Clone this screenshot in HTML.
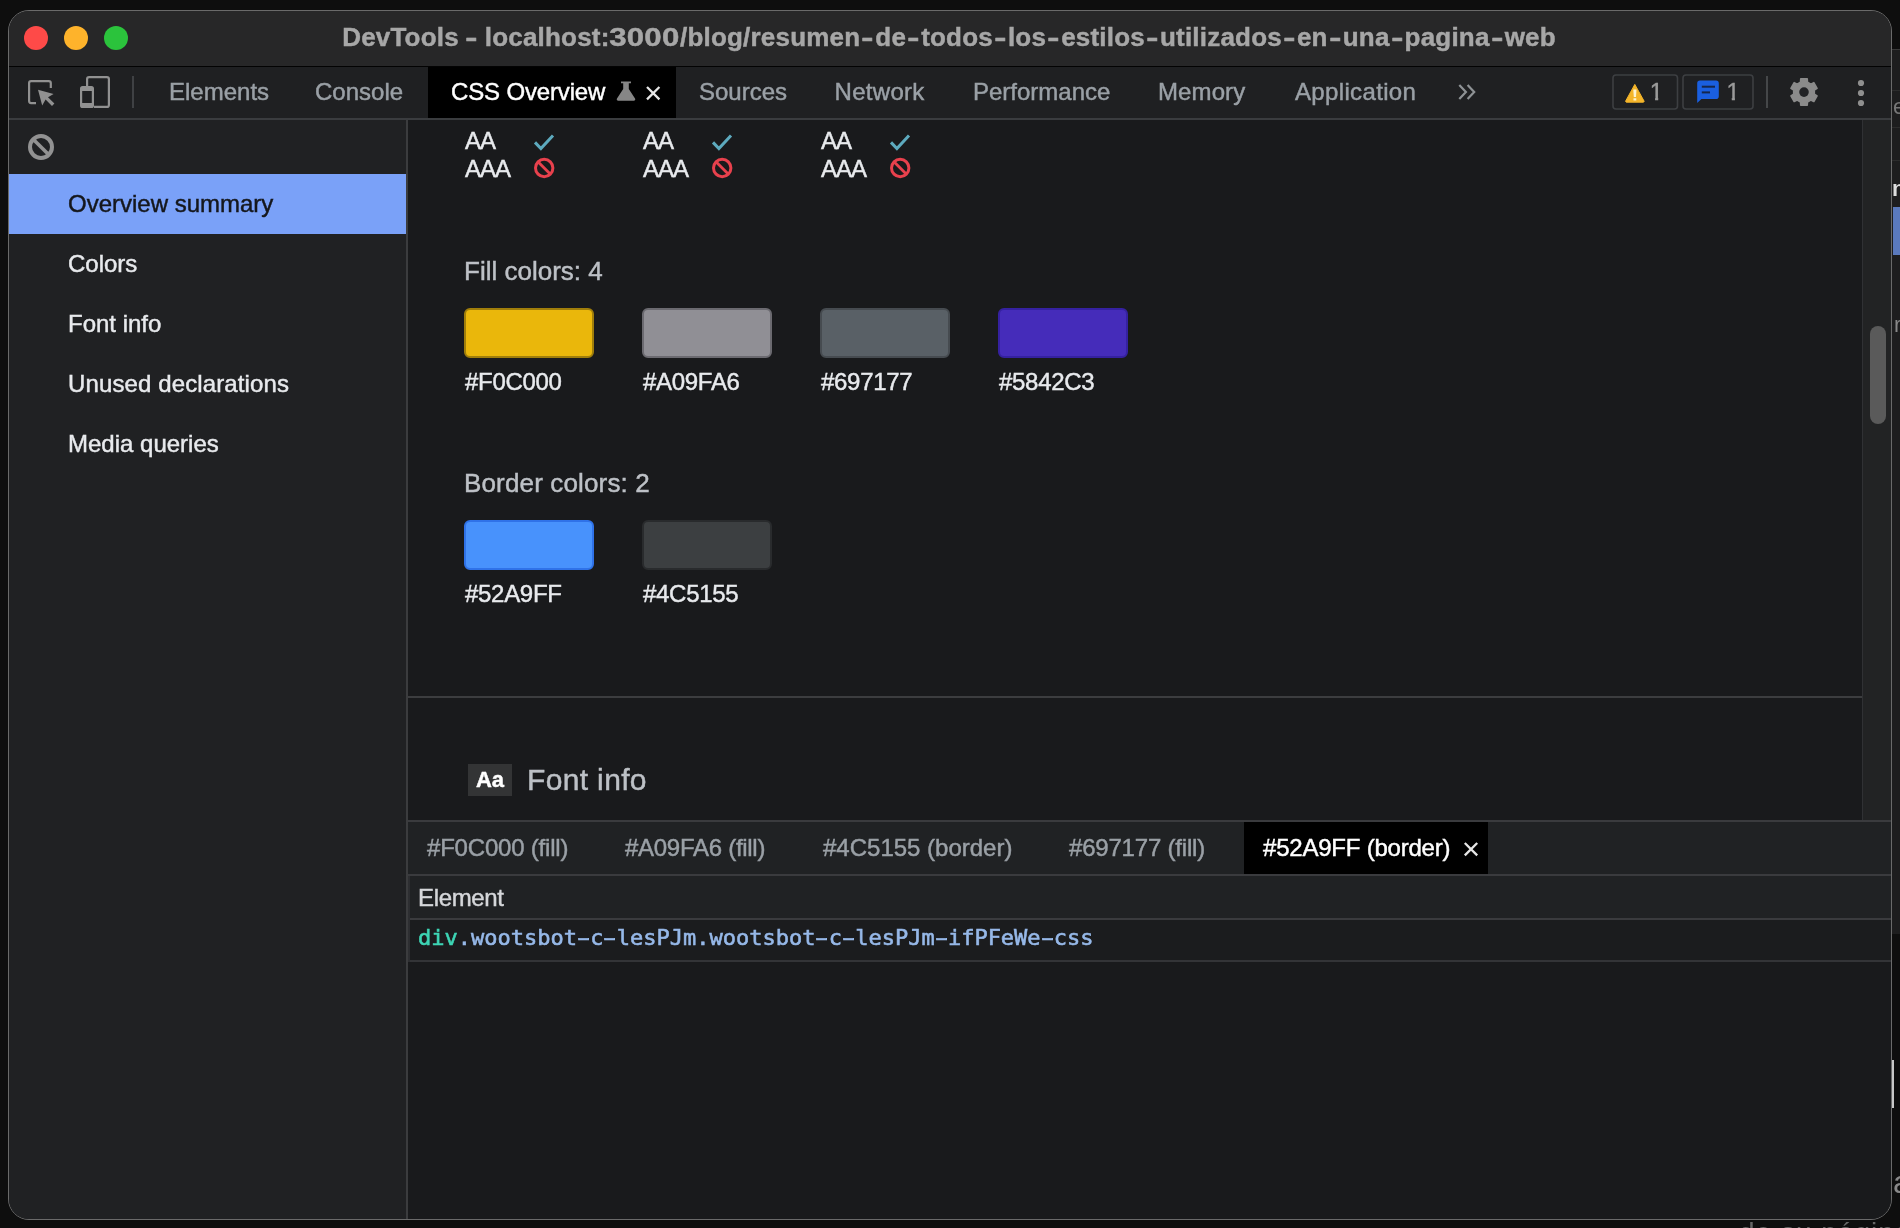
<!DOCTYPE html>
<html lang="en">
<head>
<meta charset="utf-8">
<title>DevTools</title>
<style>
*{box-sizing:border-box;margin:0;padding:0}
html,body{width:1900px;height:1228px;overflow:hidden;background:#0e0e0e;}
body{position:relative;font-family:"Liberation Sans",Arial,sans-serif;color:#e8eaed;-webkit-font-smoothing:antialiased}
.abs{position:absolute}
#win{position:absolute;left:8px;top:10px;width:1884px;height:1210px;border-radius:21px;background:#202124;border:1px solid #6a6a6a;overflow:hidden}
/* coordinates inside #in are page coordinates */
#in{-webkit-text-stroke:.45px;will-change:transform;position:absolute;left:-9px;top:-11px;width:1900px;height:1228px}
#titlebar{left:0;top:0;width:1900px;height:66px;background:#272728}
#titleline{left:0;top:66px;width:1900px;height:1px;background:#030303}
.tl{position:absolute;width:24px;height:24px;border-radius:50%;top:26px}
#title{left:0;top:21px;width:1900px;text-align:center;font-weight:bold;font-size:26px;line-height:32px;color:#a7a7a7;white-space:nowrap}
#tabbar{left:0;top:67px;width:1900px;height:51px;background:#1f2022}
#tabline{left:0;top:118px;width:1900px;height:2px;background:#3a3c3f}
.tab{position:absolute;top:76px;font-size:24px;line-height:32px;color:#9aa0a6;white-space:nowrap}
#seltab{left:428px;top:67px;width:248px;height:51px;background:#000}
.t{position:absolute;white-space:nowrap;transform-origin:0 50%}

#title{letter-spacing:.2px;word-spacing:-2px;margin-left:-1px}
#title i{font-style:normal;display:inline-block;margin:0 3.1px;transform:scaleX(1.4)}
#title u{text-decoration:none;display:inline-block;transform:scaleX(1.2);margin:0 5.9px}
#sidebar{left:9px;top:120px;width:398px;height:1100px;background:#202123}
#sideline{left:406px;top:120px;width:2px;height:1100px;background:#3b3c3e}
#selitem{left:9px;top:174px;width:397px;height:60px;background:#7aa1f8}
.si{position:absolute;left:68px;font-size:24px;line-height:32px;color:#e8eaed;white-space:nowrap}
#main{left:408px;top:120px;width:1455px;height:700px;background:#191a1c}
#sbtrack{left:1862px;top:120px;width:30px;height:700px;background:#222324;border-left:1px solid #303134}
#sbthumb{left:1870px;top:326px;width:16px;height:98px;border-radius:8px;background:#5a5a5a}
.aa{letter-spacing:-1px;margin-left:1px;position:absolute;font-size:24px;line-height:28px;color:#e8eaed;white-space:nowrap}
.h{position:absolute;left:464px;font-size:26px;line-height:32px;color:#bdc1c6;white-space:nowrap}
.sw{position:absolute;width:130px;height:50px;border-radius:6px;border:2px solid #000}
.lb{letter-spacing:-.3px;margin:1px 0 0 1px;position:absolute;font-size:24px;line-height:32px;color:#e8eaed;white-space:nowrap}
#divider{left:408px;top:696px;width:1454px;height:2px;background:#3c3d3f}
#aabox{left:468px;top:764px;width:44px;height:32px;background:#333435;color:#fff;font-weight:bold;font-size:22px;line-height:32px;text-align:center}
#fontinfo{letter-spacing:.35px;left:527px;top:761px;font-size:30px;line-height:38px;color:#bdc1c6;white-space:nowrap}
#drawerline{left:408px;top:820px;width:1484px;height:2px;background:#3a3b3e}
#drawertabs{left:408px;top:822px;width:1484px;height:53px;background:#202224}
#drawertabline{left:408px;top:874px;width:1484px;height:2px;background:#3a3b3e}
.dt{position:absolute;top:832px;font-size:24px;line-height:32px;color:#9aa0a6;white-space:nowrap}
#dtsel{left:1244px;top:822px;width:244px;height:52px;background:#000}
#gridhead{left:408px;top:876px;width:1484px;height:43px;background:#202224}
#gridheadline{left:408px;top:918px;width:1484px;height:2px;background:#3a3b3e}
#gridrow{left:408px;top:920px;width:1484px;height:40px;background:#1b1c1e}
#gridrowline{left:408px;top:960px;width:1484px;height:2px;background:#333437}
#drawerbody{left:408px;top:962px;width:1484px;height:260px;background:#191a1c}
#elem{letter-spacing:-.35px;left:418px;top:882px;font-size:24px;line-height:32px;color:#d5d7da;white-space:nowrap}
#code{left:418px;top:923px;font-family:"DejaVu Sans Mono","Liberation Mono",monospace;font-size:22px;line-height:30px;color:#96b8e8;white-space:nowrap}
#code b{font-weight:normal;color:#3dd5b5}
#code i{font-style:normal;display:inline-block;transform:scaleX(1.75)}
#code{-webkit-text-stroke:.6px}
#gridleft{left:408px;top:876px;width:2px;height:86px;background:#2d2e31}
.one{color:#9a9a9a;clip-path:polygon(0 0,8.5px 0,8.5px 100%,5.4px 100%,5.4px 21px,0 21px)}
</style>
</head>
<body>

<div id="desk" style="position:absolute;left:0;top:0;width:1900px;height:1228px;will-change:transform;overflow:hidden">
<div class="abs" style="left:1892px;top:49px;width:8px;height:885px;background:#1d1d1e"></div>
<div class="abs" style="left:1892px;top:49px;width:8px;height:1px;background:#3a3a3a"></div>
<div class="abs" style="left:1892px;top:90px;width:8px;height:1px;background:#2c2c2c"></div>
<div class="abs" style="left:1892px;top:127px;width:8px;height:1px;background:#2c2c2c"></div>
<div class="abs" style="left:1892px;top:160px;width:8px;height:1px;background:#2c2c2c"></div>
<div class="abs" style="left:1893px;top:207px;width:7px;height:48px;background:#5a79bc"></div>
<div class="t" style="left:1893px;top:94px;font-size:22px;line-height:26px;color:#777">e</div>
<div class="t" style="left:1892px;top:176px;font-size:22px;line-height:26px;color:#ddd;font-weight:bold">n</div>
<div class="t" style="left:1894px;top:312px;font-size:22px;line-height:26px;color:#888">ra</div>
<div class="abs" style="left:1892px;top:1060px;width:2px;height:48px;background:#c8c8c8"></div>
<div class="t" style="left:1893px;top:1164px;font-size:32px;line-height:36px;color:#888">a</div>
<div class="t" style="left:1739px;top:1216.5px;font-size:28px;line-height:32px;color:#666;letter-spacing:1px">de su página</div>
</div>
<div id="win"><div id="in">
<div class="abs" id="titlebar"></div>
<div class="abs" id="titleline"></div>
<div class="tl" style="left:24px;background:#fe4a48"></div>
<div class="tl" style="left:64px;background:#feb32b"></div>
<div class="tl" style="left:104px;background:#2bc33c"></div>
<div class="abs" id="title">DevTools <i>-</i> localhost:<u>3000</u>/blog/resumen<i>-</i>de<i>-</i>todos<i>-</i>los<i>-</i>estilos<i>-</i>utilizados<i>-</i>en<i>-</i>una<i>-</i>pagina<i>-</i>web</div>
<div class="abs" id="tabbar"></div>
<div class="abs" id="tabline"></div>
<div class="abs" id="seltab"></div>
<div class="tab" style="left:169px">Elements</div>
<div class="tab" style="left:315px">Console</div>
<div class="tab" style="left:451px;color:#fff;letter-spacing:-.15px">CSS Overview</div>
<div class="tab" style="left:699px">Sources</div>
<div class="tab" style="left:834.5px;letter-spacing:.3px">Network</div>
<div class="tab" style="left:973px">Performance</div>
<div class="tab" style="left:1158px;letter-spacing:.1px">Memory</div>
<div class="tab" style="left:1295px;letter-spacing:.35px">Application</div>

<div class="abs" id="sidebar"></div>
<div class="abs" id="main"></div>
<div class="abs" id="sideline"></div>
<div class="abs" id="selitem"></div>
<div class="si" style="top:188px;color:#15171c">Overview summary</div>
<div class="si" style="top:248px">Colors</div>
<div class="si" style="top:308px">Font info</div>
<div class="si" style="top:368px;letter-spacing:.12px">Unused declarations</div>
<div class="si" style="top:428px">Media queries</div>
<div class="abs" id="sbtrack"></div>
<div class="abs" id="sbthumb"></div>

<div class="aa" style="left:464px;top:127px">AA<br>AAA</div>
<div class="aa" style="left:642px;top:127px">AA<br>AAA</div>
<div class="aa" style="left:820px;top:127px">AA<br>AAA</div>

<div class="h" style="top:255px">Fill colors: 4</div>
<div class="sw" style="left:464px;top:308px;background:#eab70b;border-color:#a07e0a"></div>
<div class="sw" style="left:642px;top:308px;background:#908f95;border-color:#6b6a70"></div>
<div class="sw" style="left:820px;top:308px;background:#596066;border-color:#464b50"></div>
<div class="sw" style="left:998px;top:308px;background:#452cba;border-color:#3521a0"></div>
<div class="lb" style="left:464px;top:365px">#F0C000</div>
<div class="lb" style="left:642px;top:365px">#A09FA6</div>
<div class="lb" style="left:820px;top:365px">#697177</div>
<div class="lb" style="left:998px;top:365px">#5842C3</div>

<div class="h" style="top:467px;letter-spacing:.15px">Border colors: 2</div>
<div class="sw" style="left:464px;top:520px;background:#4892fc;border-color:#2f72e8"></div>
<div class="sw" style="left:642px;top:520px;background:#3c3f41;border-color:#292b2d"></div>
<div class="lb" style="left:464px;top:577px">#52A9FF</div>
<div class="lb" style="left:642px;top:577px">#4C5155</div>

<div class="abs" id="divider"></div>
<div class="abs" id="aabox">Aa</div>
<div class="abs" id="fontinfo">Font info</div>

<div class="abs" id="drawerline"></div>
<div class="abs" id="drawertabs"></div>
<div class="abs" id="dtsel"></div>
<div class="abs" id="drawertabline"></div>
<div class="dt" style="left:427px;letter-spacing:-.2px">#F0C000 (fill)</div>
<div class="dt" style="left:625px;letter-spacing:-.28px">#A09FA6 (fill)</div>
<div class="dt" style="left:823px">#4C5155 (border)</div>
<div class="dt" style="left:1069px;letter-spacing:-.2px">#697177 (fill)</div>
<div class="dt" style="left:1263px;color:#fff;letter-spacing:-.22px">#52A9FF (border)</div>
<div class="abs" id="gridhead"></div>
<div class="abs" id="gridheadline"></div>
<div class="abs" id="gridrow"></div>
<div class="abs" id="gridrowline"></div>
<div class="abs" id="drawerbody"></div>
<div class="abs" id="gridleft"></div>
<div class="abs" id="elem">Element</div>
<div class="abs" id="code"><b>div</b>.wootsbot<i>-</i>c<i>-</i>lesPJm.wootsbot<i>-</i>c<i>-</i>lesPJm<i>-</i>ifPFeWe<i>-</i>css</div>

<svg class="abs" id="icons" style="left:0;top:0" width="1900" height="1228" viewBox="0 0 1900 1228">
<!-- inspect -->
<g fill="none" stroke="#919191" stroke-width="2.2" stroke-linejoin="round">
<path d="M36,103.1 H31.1 a2,2 0 0 1 -2,-2 V83.1 a2,2 0 0 1 2,-2 H48.8 a2,2 0 0 1 2,2 V88"/>
</g>
<path d="M38,89.8 L53.6,94 L48,97.2 L54.4,103.6 L52,106 L45.6,99.6 L42.2,105.4 Z" fill="#919191"/>
<!-- device -->
<g fill="none" stroke="#919191" stroke-width="2.2" stroke-linejoin="round">
<path d="M87.1,86 V79.1 a2,2 0 0 1 2,-2 H106.9 a2,2 0 0 1 2,2 V104.9 a2,2 0 0 1 -2,2 H94"/>
<rect x="81.1" y="87.1" width="11.8" height="19.8" rx="1.5"/>
</g>
<rect x="81" y="87" width="12" height="4" fill="#919191"/>
<rect x="81" y="103" width="12" height="4" fill="#919191"/>
<rect x="132" y="76" width="2" height="32" fill="#3f4144"/>
<!-- flask -->
<path d="M621,81.4 H631 V83.2 H628.8 V89 L635,98.6 a1.4,1.4 0 0 1 -1.2,2.2 H618.2 a1.4,1.4 0 0 1 -1.2,-2.2 L623.2,89 V83.2 H621 Z" fill="#868686"/>
<!-- tab close -->
<path d="M647,87 L659.4,99.4 M659.4,87 L647,99.4" stroke="#e6e6e6" stroke-width="2.3" fill="none"/>
<!-- chevrons -->
<path d="M1459.3,85.1 L1465.9,92 L1459.3,98.9 M1467.6,85.1 L1474.2,92 L1467.6,98.9" stroke="#8e9295" stroke-width="2.2" fill="none"/>
<!-- badges -->
<rect x="1613" y="75" width="64.5" height="34" rx="3" fill="none" stroke="#3d3f42" stroke-width="1.6"/>
<rect x="1683" y="75" width="70" height="34" rx="3" fill="none" stroke="#3d3f42" stroke-width="1.6"/>
<path d="M1634.8,84.4 L1644,101 a0.8,0.8 0 0 1 -0.7,1.2 H1626.4 a0.8,0.8 0 0 1 -0.7,-1.2 Z" fill="#f4b52a" stroke="#f4b52a" stroke-width="1" stroke-linejoin="round"/>
<path d="M1633.3,89.4 H1636.5 L1636,97 H1633.8 Z M1633.5,98.2 H1636.3 V100.6 H1633.5 Z" fill="#fdf3d0"/>
<path d="M1700,80.6 H1716 a2.8,2.8 0 0 1 2.8,2.8 V96.2 a2.8,2.8 0 0 1 -2.8,2.8 H1701.4 L1697.2,103 V83.4 a2.8,2.8 0 0 1 2.8,-2.8 Z" fill="#1a5fe0"/>
<rect x="1701.8" y="85.7" width="13.2" height="2" fill="#14274d"/>
<rect x="1701.8" y="91.4" width="8.2" height="2" fill="#14274d"/>
<rect x="1766" y="76" width="2" height="32" fill="#454749"/>
<!-- gear -->
<path d="M1800.55,82.18 L1800.76,78.89 L1807.24,78.89 L1807.45,82.18 L1810.86,84.15 L1813.82,82.69 L1817.06,88.31 L1814.31,90.13 L1814.31,94.07 L1817.06,95.89 L1813.82,101.51 L1810.86,100.05 L1807.45,102.02 L1807.24,105.31 L1800.76,105.31 L1800.55,102.02 L1797.14,100.05 L1794.18,101.51 L1790.94,95.89 L1793.69,94.07 L1793.69,90.13 L1790.94,88.31 L1794.18,82.69 L1797.14,84.15Z" fill="#8b8b8b" stroke="#8b8b8b" stroke-width="1.6" stroke-linejoin="round"/>
<circle cx="1804" cy="92.1" r="4.8" fill="#222326"/>
<!-- dots -->
<circle cx="1861" cy="83" r="3.1" fill="#8f8f8f"/><circle cx="1861" cy="93" r="3.1" fill="#8f8f8f"/><circle cx="1861" cy="103" r="3.1" fill="#8f8f8f"/>
<!-- clear -->
<g fill="none" stroke="#929292"><circle cx="41" cy="147" r="11" stroke-width="4"/><path d="M33.4,139.4 L48.6,154.6" stroke-width="3.6"/></g>
<!-- checks / nos -->
<g id="chk"><path d="M535,142.4 L540.9,148.6 L553,135.6" stroke="#5daabe" stroke-width="3" fill="none"/>
<g fill="none" stroke="#e8414d"><circle cx="544.2" cy="168" r="8.7" stroke-width="3"/><path d="M538.2,162 L550.2,174" stroke-width="2.8"/></g></g>
<use href="#chk" x="178"/><use href="#chk" x="356"/>
<!-- drawer tab close -->
<path d="M1464.8,843 L1477.2,855.4 M1477.2,843 L1464.8,855.4" stroke="#e6e6e6" stroke-width="2.3" fill="none"/>
</svg>
<div class="tab one" style="left:1649.7px">1</div>
<div class="tab one" style="left:1726.4px">1</div>
</div></div>
</body>
</html>
